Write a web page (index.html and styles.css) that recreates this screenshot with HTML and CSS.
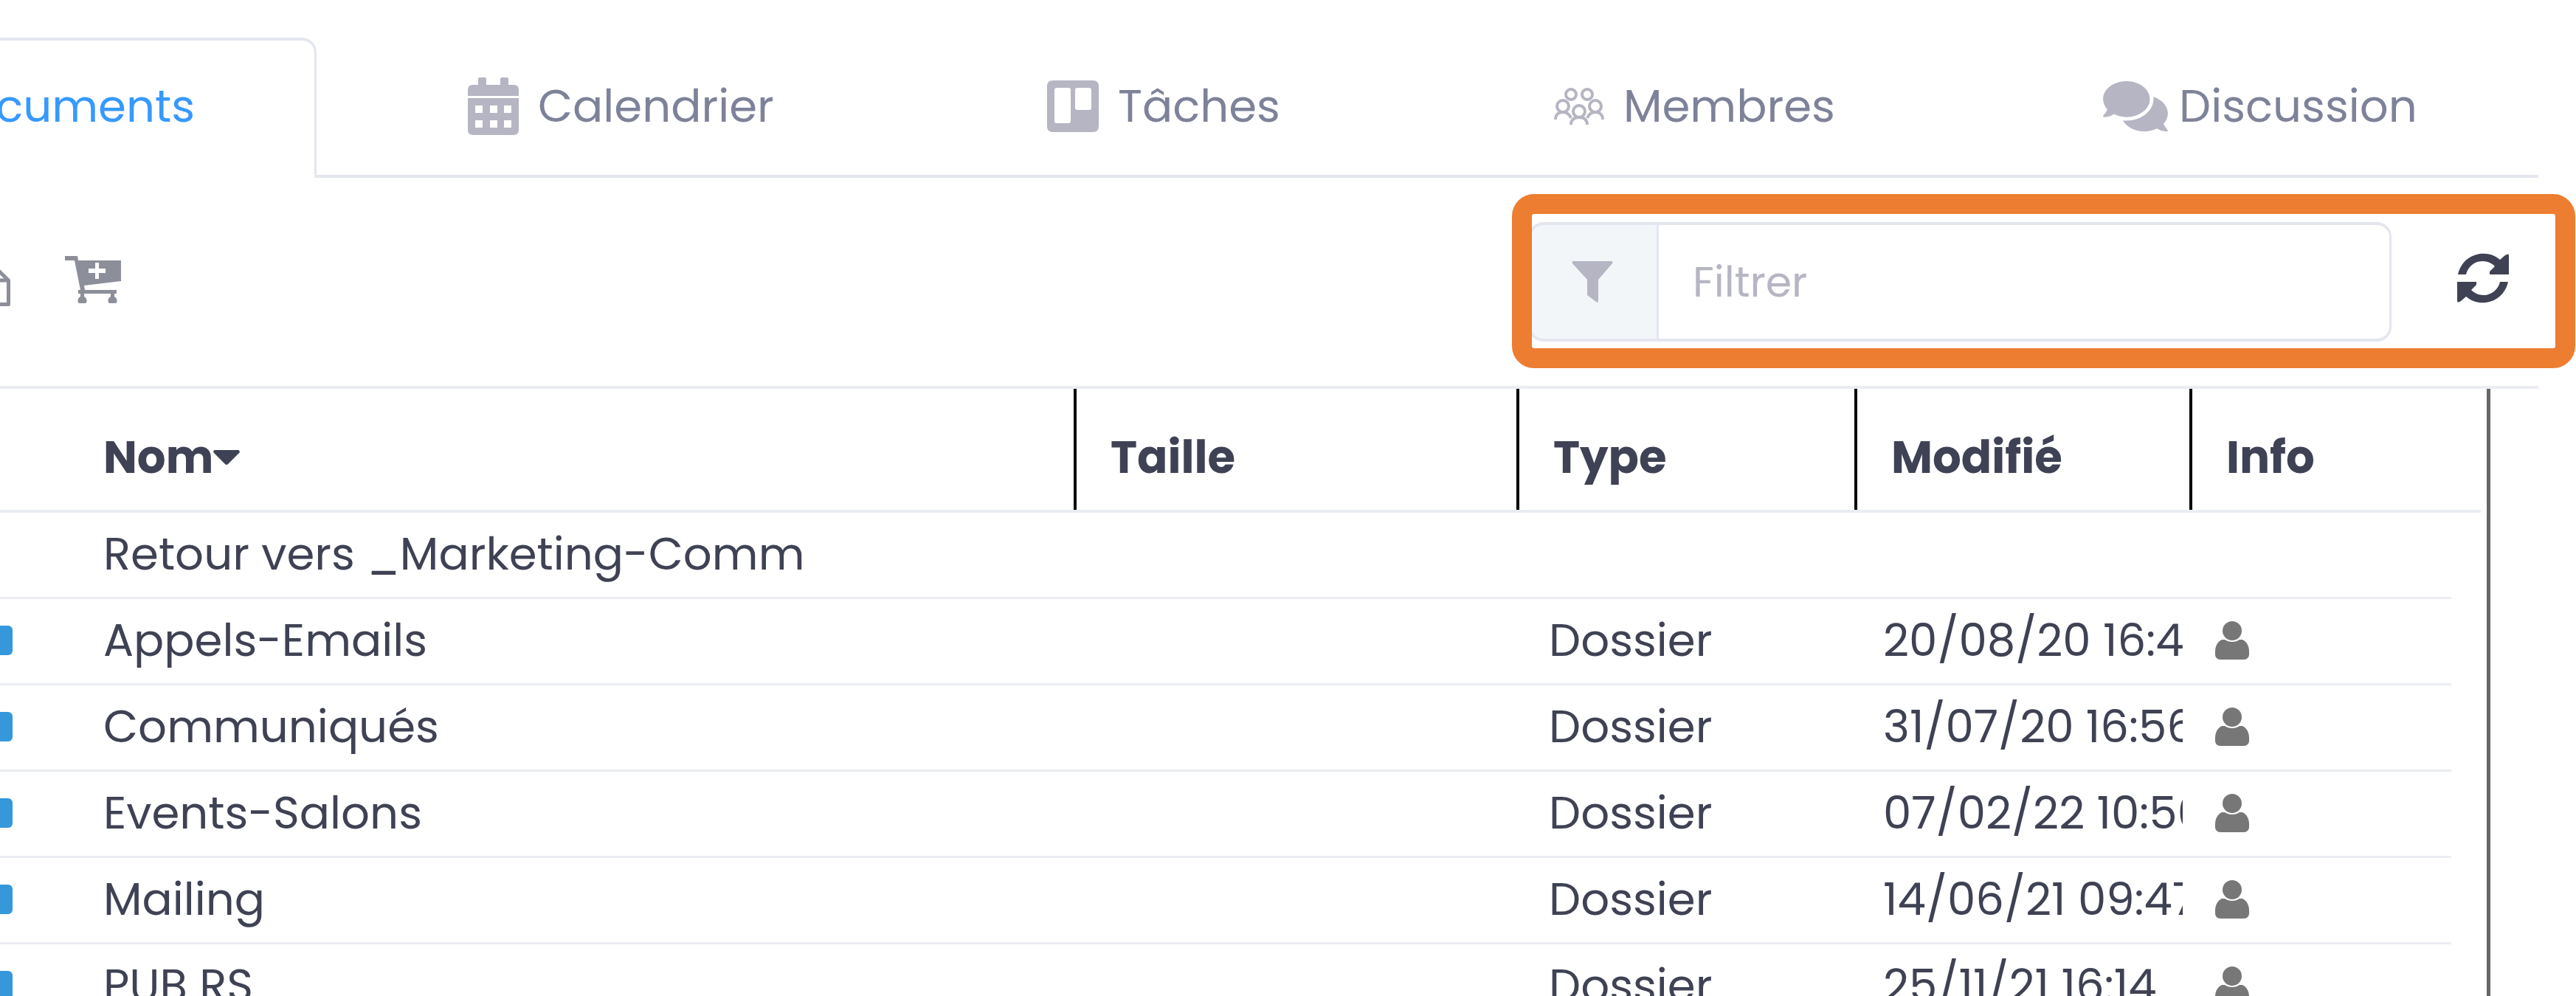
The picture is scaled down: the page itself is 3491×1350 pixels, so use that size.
FILE: index.html
```html
<!DOCTYPE html>
<html lang="fr">
<head>
<meta charset="utf-8">
<title>Documents</title>
<link rel="stylesheet" href="styles.css">
</head>
<body>
<svg class="sprite" aria-hidden="true">
  <symbol id="user" viewBox="0 0 46 52">
    <circle cx="23" cy="13" r="13"/>
    <path d="M9 25h4c3 2 6 3 10 3s7-1 10-3h4c6 3 9 9 9 16v4c0 4-3 7-7 7H7c-4 0-7-3-7-7v-4c0-7 3-13 9-16z"/>
  </symbol>
</svg>

<nav class="tabs">
  <a class="tab active" href="#documents">Documents</a>
  <a class="tab" href="#calendrier">
    <svg width="69" height="78" viewBox="0 0 69 78"><path fill-rule="evenodd" d="M14 10V2q0-2 2-2h7q2 0 2 2v8h19V2q0-2 2-2h7q2 0 2 2v8h7q7 0 7 7v8H0v-8q0-7 7-7zM0 28h69v43q0 7-7 7H7q-7 0-7-7zM10 38v10h10V38zM30 38v10h10V38zM49 38v10h10V38zM10 58v10h10V58zM30 58v10h10V58zM49 58v10h10V58z"/></svg>
    Calendrier
  </a>
  <a class="tab" href="#taches">
    <svg width="70" height="70" viewBox="0 0 70 70"><path fill-rule="evenodd" d="M8 0h54q8 0 8 8v54q0 8-8 8H8q-8 0-8-8V8q0-8 8-8zM13 10q-3 0-3 3v42q0 3 3 3h16q3 0 3-3V13q0-3-3-3zM41 10q-3 0-3 3v24q0 3 3 3h16q3 0 3-3V13q0-3-3-3z"/></svg>
    Tâches
  </a>
  <a class="tab" href="#membres">
    <svg class="outline" width="68" height="51" viewBox="0 0 68 51"><circle cx="23" cy="9" r="7"/><circle cx="45" cy="9" r="7"/><circle cx="12" cy="25" r="8"/><circle cx="56" cy="25" r="8"/><circle cx="34" cy="32" r="8"/><path d="M2 43c0-6 4-10 10-10 5 0 9 3 11 8M66 43c0-6-4-10-10-10-5 0-9 3-11 8M23 50c0-6 4-10 11-10s11 4 11 10"/></svg>
    Membres
  </a>
  <a class="tab tight" href="#discussion">
    <svg width="88" height="78" viewBox="0 0 576 512"><path d="M416 192c0-88.4-93.1-160-208-160S0 103.6 0 192c0 34.3 14.1 65.9 38 92-13.4 30.2-35.5 54.2-35.8 54.5-2.2 2.3-2.8 5.7-1.5 8.7S4.8 352 8 352c36.6 0 66.9-12.3 88.7-25 32.2 15.7 70.3 25 111.3 25 114.9 0 208-71.6 208-160zm122 220c23.9-26 38-57.7 38-92 0-66.9-53.5-124.2-129.3-148.1.9 6.6 1.3 13.3 1.3 20.1 0 105.9-107.7 192-240 192-10.8 0-21.3-.8-31.7-1.9C207.8 439.6 281.8 480 368 480c41 0 79.1-9.2 111.3-25 21.8 12.7 52.1 25 88.7 25 3.2 0 6.1-1.9 7.3-4.8 1.3-2.9.7-6.3-1.5-8.7-.3-.3-22.4-24.2-35.8-54.5z"/></svg>
    Discussion
  </a>
</nav>

<div class="toolbar">
  <div class="tools">
    <button class="tool" type="button" aria-label="Nouveau document">
      <svg width="14" height="76" viewBox="0 0 14 76"><path d="M-12 16L11.500 39V71.500H-14M-4 22V39H11" fill="none" stroke="currentColor" stroke-width="5" stroke-linejoin="round"/></svg>
    </button>
    <button class="tool" type="button" aria-label="Ajouter au panier">
      <svg width="76" height="64" viewBox="0 0 76 64"><path fill-rule="evenodd" d="M0 0h17l1 6h58v28l-50 6 1 6h43v5h-3v4a6 6 0 1 1-5 0v-4H26v4a6 6 0 1 1-5 0v-4h-3v-5h3L13 6H0zM41 9v8h-9v6h9v8h5v-8h9v-6h-9V9z"/></svg>
    </button>
  </div>
  <form class="search">
    <label class="addon" for="filter" aria-label="Filtrer">
      <svg width="56" height="56" viewBox="0 0 56 56"><path d="M2 0h52q2 0 1 3L36 25v29q0 3-3 1L21 46V25L1 3Q0 0 2 0z"/></svg>
    </label>
    <input class="filter" id="filter" type="text" placeholder="Filtrer">
    <button class="refresh" type="button" aria-label="Actualiser">
      <svg width="72" height="72" viewBox="0 0 72 72"><path id="arrow" d="M2 31A35 35 0 0 1 59 11l7-6q5-3 5 0v26H45v-4l7-7A23 23 0 0 0 13 31z"/><use href="#arrow" transform="rotate(180 36 36)"/></svg>
    </button>
  </form>
  <div class="highlight"></div>
</div>

<main class="listing">
<table class="files">
  <colgroup><col class="c-icon"><col><col class="c-size"><col class="c-type"><col class="c-date"><col class="c-info"><col class="c-end"></colgroup>
  <thead>
    <tr>
      <th></th>
      <th class="name"><button class="sort" type="button">Nom<svg width="36" height="20" viewBox="0 0 36 20"><path d="M2 0h32q3 1 1 4L20 19q-2 2-4 0L1 4Q-1 1 2 0z"/></svg></button></th>
      <th>Taille</th><th>Type</th><th>Modifié</th><th colspan="2">Info</th>
    </tr>
  </thead>
  <tbody>
    <tr><td></td><td class="name">Retour vers _Marketing-Comm</td><td></td><td></td><td></td><td></td></tr>
    <tr><td><i class="folder"></i></td><td class="name">Appels-Emails</td><td></td><td class="type">Dossier</td><td class="date"><div>20/08/20 16:44</div></td><td class="info"><svg width="46" height="52"><use href="#user"/></svg></td></tr>
    <tr><td><i class="folder"></i></td><td class="name">Communiqués</td><td></td><td class="type">Dossier</td><td class="date"><div>31/07/20 16:56</div></td><td class="info"><svg width="46" height="52"><use href="#user"/></svg></td></tr>
    <tr><td><i class="folder"></i></td><td class="name">Events-Salons</td><td></td><td class="type">Dossier</td><td class="date"><div>07/02/22 10:50</div></td><td class="info"><svg width="46" height="52"><use href="#user"/></svg></td></tr>
    <tr><td><i class="folder"></i></td><td class="name">Mailing</td><td></td><td class="type">Dossier</td><td class="date"><div>14/06/21 09:47</div></td><td class="info"><svg width="46" height="52"><use href="#user"/></svg></td></tr>
    <tr><td><i class="folder"></i></td><td class="name">PUB RS</td><td></td><td class="type">Dossier</td><td class="date"><div>25/11/21 16:14</div></td><td class="info"><svg width="46" height="52"><use href="#user"/></svg></td></tr>
  </tbody>
</table>
</main>
</body>
</html>
```
FILE: styles.css
```css
* { box-sizing: border-box; }

html { height: 100%; }

body {
  margin: 0;
  height: 100%;
  padding-top: 51px;
  overflow: hidden;
  display: flex;
  flex-direction: column;
  background: #fff;
  color: #3f4254;
  font: 400 61px/92px Poppins, Inter, sans-serif;
}

svg {
  display: block;
  flex: none;
  fill: currentColor;
}

.sprite { display: none; }

button {
  padding: 0;
  border: 0;
  background: none;
  color: inherit;
  font: inherit;
}

/* Tabs */
.tabs {
  flex: none;
  display: grid;
  grid-template-columns: 429px 785fr 687fr 744fr 795fr;
  margin-right: 51px;
  height: 190px;
}

.tab {
  display: flex;
  align-items: center;
  gap: 26px;
  padding: 0 0 0 205px;
  border-bottom: 4px solid #e4e6ef;
  color: #7e8299;
  text-decoration: none;
  white-space: nowrap;
}

.tab svg { color: #b5b5c3; }
.tab.tight { gap: 15px; }

.tab .outline {
  fill: none;
  stroke: currentColor;
  stroke-width: 4;
}

.tab.active {
  justify-content: flex-end;
  padding: 0 162px 8px 0;
  border: solid #e4e6ef;
  border-width: 4px 3px 0 0;
  border-top-right-radius: 20px;
  color: #3699ff;
}

/* Toolbar */
.toolbar {
  position: relative;
  flex: none;
  display: flex;
  justify-content: space-between;
  align-items: center;
  height: 286px;
  margin-right: 51px;
  padding-right: 39px;
  border-bottom: 4px solid #ebedf3;
}

.tools {
  display: flex;
  align-items: center;
  gap: 74px;
  padding-bottom: 6px;
}

.tool { color: #8c8e9a; }

.search {
  display: flex;
  align-items: center;
}

.addon {
  display: flex;
  align-items: center;
  justify-content: center;
  width: 173px;
  height: 162px;
  padding-right: 4px;
  border: solid #e4e6ef;
  border-width: 4px 0 4px 3px;
  border-radius: 20px 0 0 20px;
  background: #f3f6f9;
  color: #b5b5c3;
}

.filter {
  width: 996px;
  height: 162px;
  margin-right: 88px;
  padding: 0 46px;
  border: solid #e4e6ef;
  border-width: 4px 3px;
  border-radius: 0 20px 20px 0;
  background: #fff;
  color: #3f4254;
  font: inherit;
  font-size: 57px;
}

.filter::placeholder { color: #b5b5c3; opacity: 1; }

.refresh { padding-bottom: 10px; }

.highlight {
  position: absolute;
  top: 22px;
  right: -50px;
  width: 1441px;
  height: 236px;
  border: 27px solid #ed7d31;
  border-radius: 30px;
  pointer-events: none;
}

/* File list */
.listing {
  flex: 1;
  min-height: 0;
  margin-right: 116px;
  padding-right: 8px;
  overflow: hidden;
  border-right: 5px solid #666;
}

.files {
  width: 100%;
  table-layout: fixed;
  border-collapse: separate;
  border-spacing: 0;
}

.c-icon { width: 140px; }
.c-size { width: 600px; }
.c-type { width: 458px; }
.c-date { width: 454px; }
.c-info { width: 351px; }
.c-end { width: 40px; }

th {
  height: 168px;
  padding: 22px 0 0 46px;
  border-bottom: 4px solid #ebedf3;
  background: linear-gradient(#000, #000) right / 4px 100% no-repeat;
  text-align: left;
  font-weight: 700;
}

th:first-child,
th:last-child { background: none; }

td {
  height: 117px;
  padding: 0 0 2px;
  border-bottom: 3px solid #ebedf3;
  white-space: nowrap;
}

th.name,
td.name { padding-left: 0; }
.type { padding-left: 40px; }
.date { padding: 0 13px 2px 35px; }
.date div { overflow: hidden; }
.info { padding-left: 31px; color: #777; }

.sort {
  display: flex;
  align-items: center;
  font-weight: 700;
}

.folder {
  display: block;
  width: 17px;
  height: 40px;
  border-radius: 0 6px 6px 0;
  background: #3498db;
}
```
